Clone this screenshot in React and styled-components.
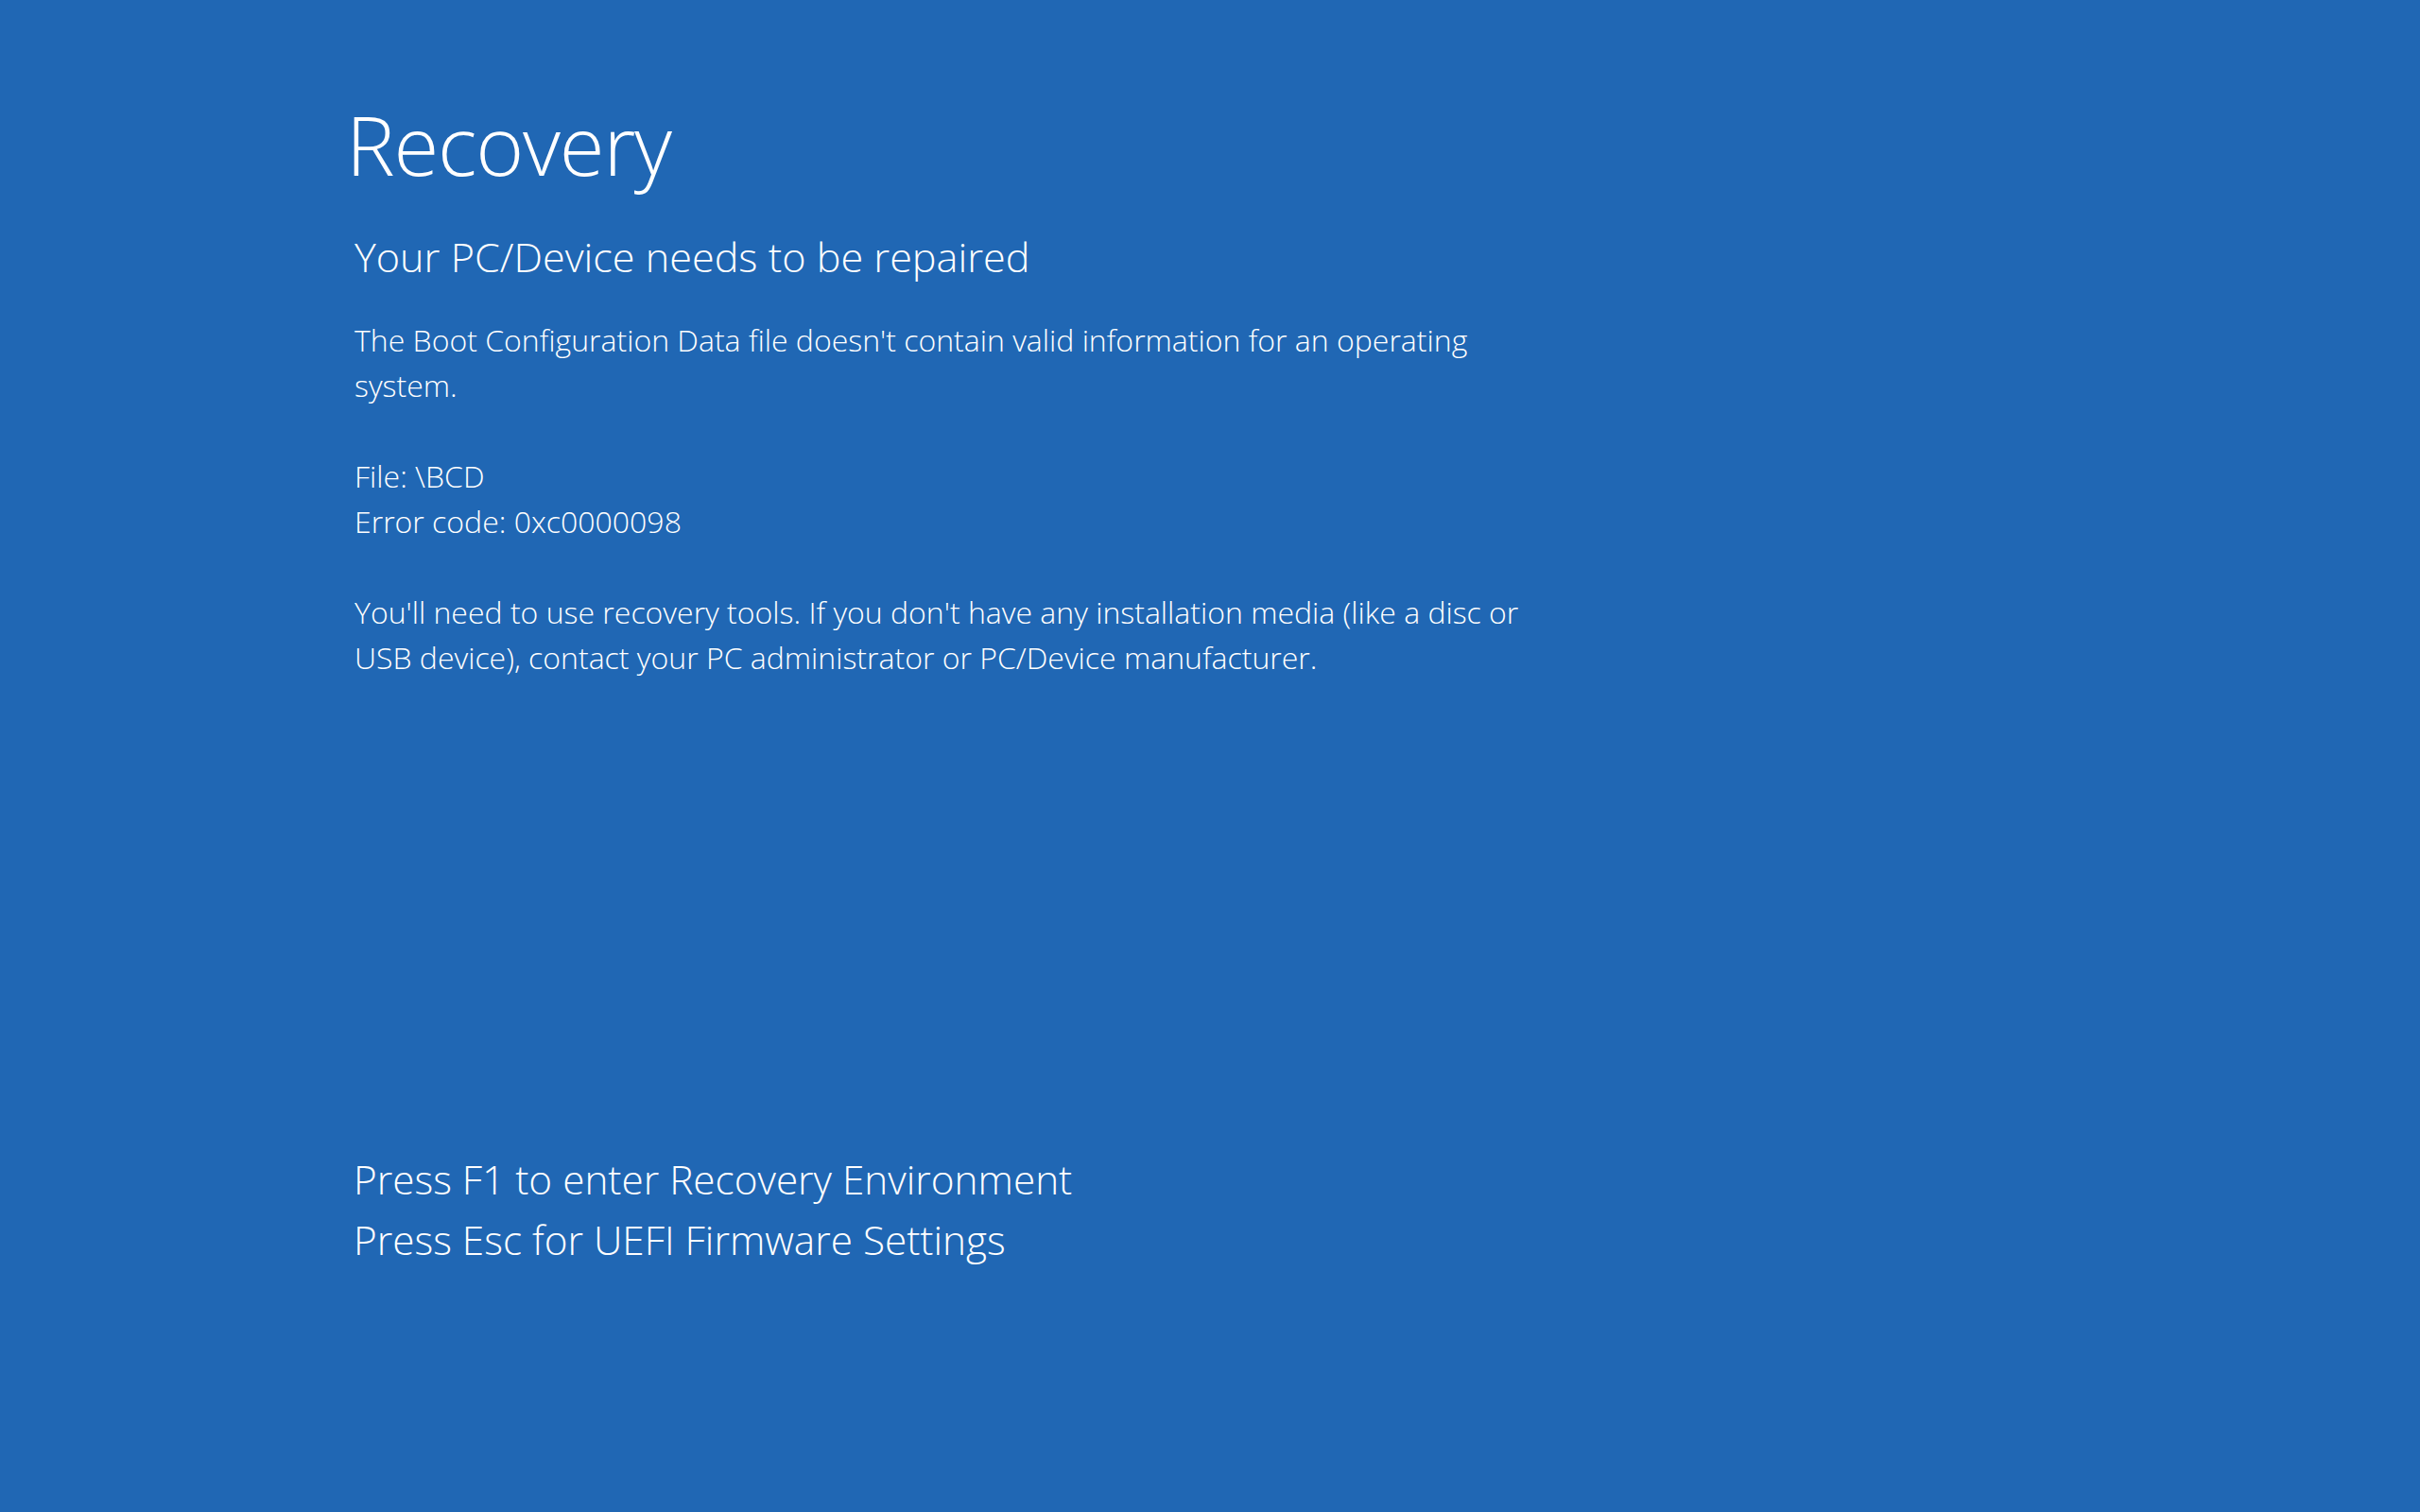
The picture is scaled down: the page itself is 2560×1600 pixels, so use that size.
import React from "react";
import styled, { createGlobalStyle } from "styled-components";

const GlobalStyle = createGlobalStyle`
  html, body {
    margin: 0;
    padding: 0;
    background: #2067b4;
  }
  body {
    font-family: "Open Sans", "Noto Sans", sans-serif;
    color: #ffffff;
  }
`;

const Screen = styled.div`
  height: 100vh;
  box-sizing: border-box;
  display: flex;
  flex-direction: column;
  padding: 92px 0 256px 366px;
  background: #2067b4;
`;

const Title = styled.h1`
  margin: 0;
  font-size: 87px;
  font-weight: 300;
  line-height: 120px;
  letter-spacing: -1.2px;
`;

const Content = styled.div`
  padding-left: 9px;
`;

const Subtitle = styled.h2`
  margin: 30px 0 0;
  font-size: 43.2px;
  font-weight: 300;
  line-height: 60px;
`;

const Message = styled.p`
  margin: 34px 0 0;
  width: 1260px;
  font-size: 32px;
  font-weight: 300;
  line-height: 48px;
`;

const Gap = styled.span`
  display: block;
  height: 48px;
`;

const Footer = styled.div`
  margin-top: auto;
  padding-left: 8px;
`;

const Hint = styled.div`
  font-size: 42.3px;
  font-weight: 300;
  line-height: 64px;
`;

export default function App() {
  return (
    <>
      <GlobalStyle />
      <Screen>
        <Title>Recovery</Title>
        <Content>
          <Subtitle>Your PC/Device needs to be repaired</Subtitle>
          <Message>
            The Boot Configuration Data file doesn't contain valid information for an operating system.
            <Gap />
            File: \BCD
            <br />
            Error code: 0xc0000098
            <Gap />
            You'll need to use recovery tools. If you don't have any installation media (like a disc or USB device), contact your PC administrator or PC/Device manufacturer.
          </Message>
        </Content>
        <Footer>
          <Hint>Press F1 to enter Recovery Environment</Hint>
          <Hint>Press Esc for UEFI Firmware Settings</Hint>
        </Footer>
      </Screen>
    </>
  );
}
